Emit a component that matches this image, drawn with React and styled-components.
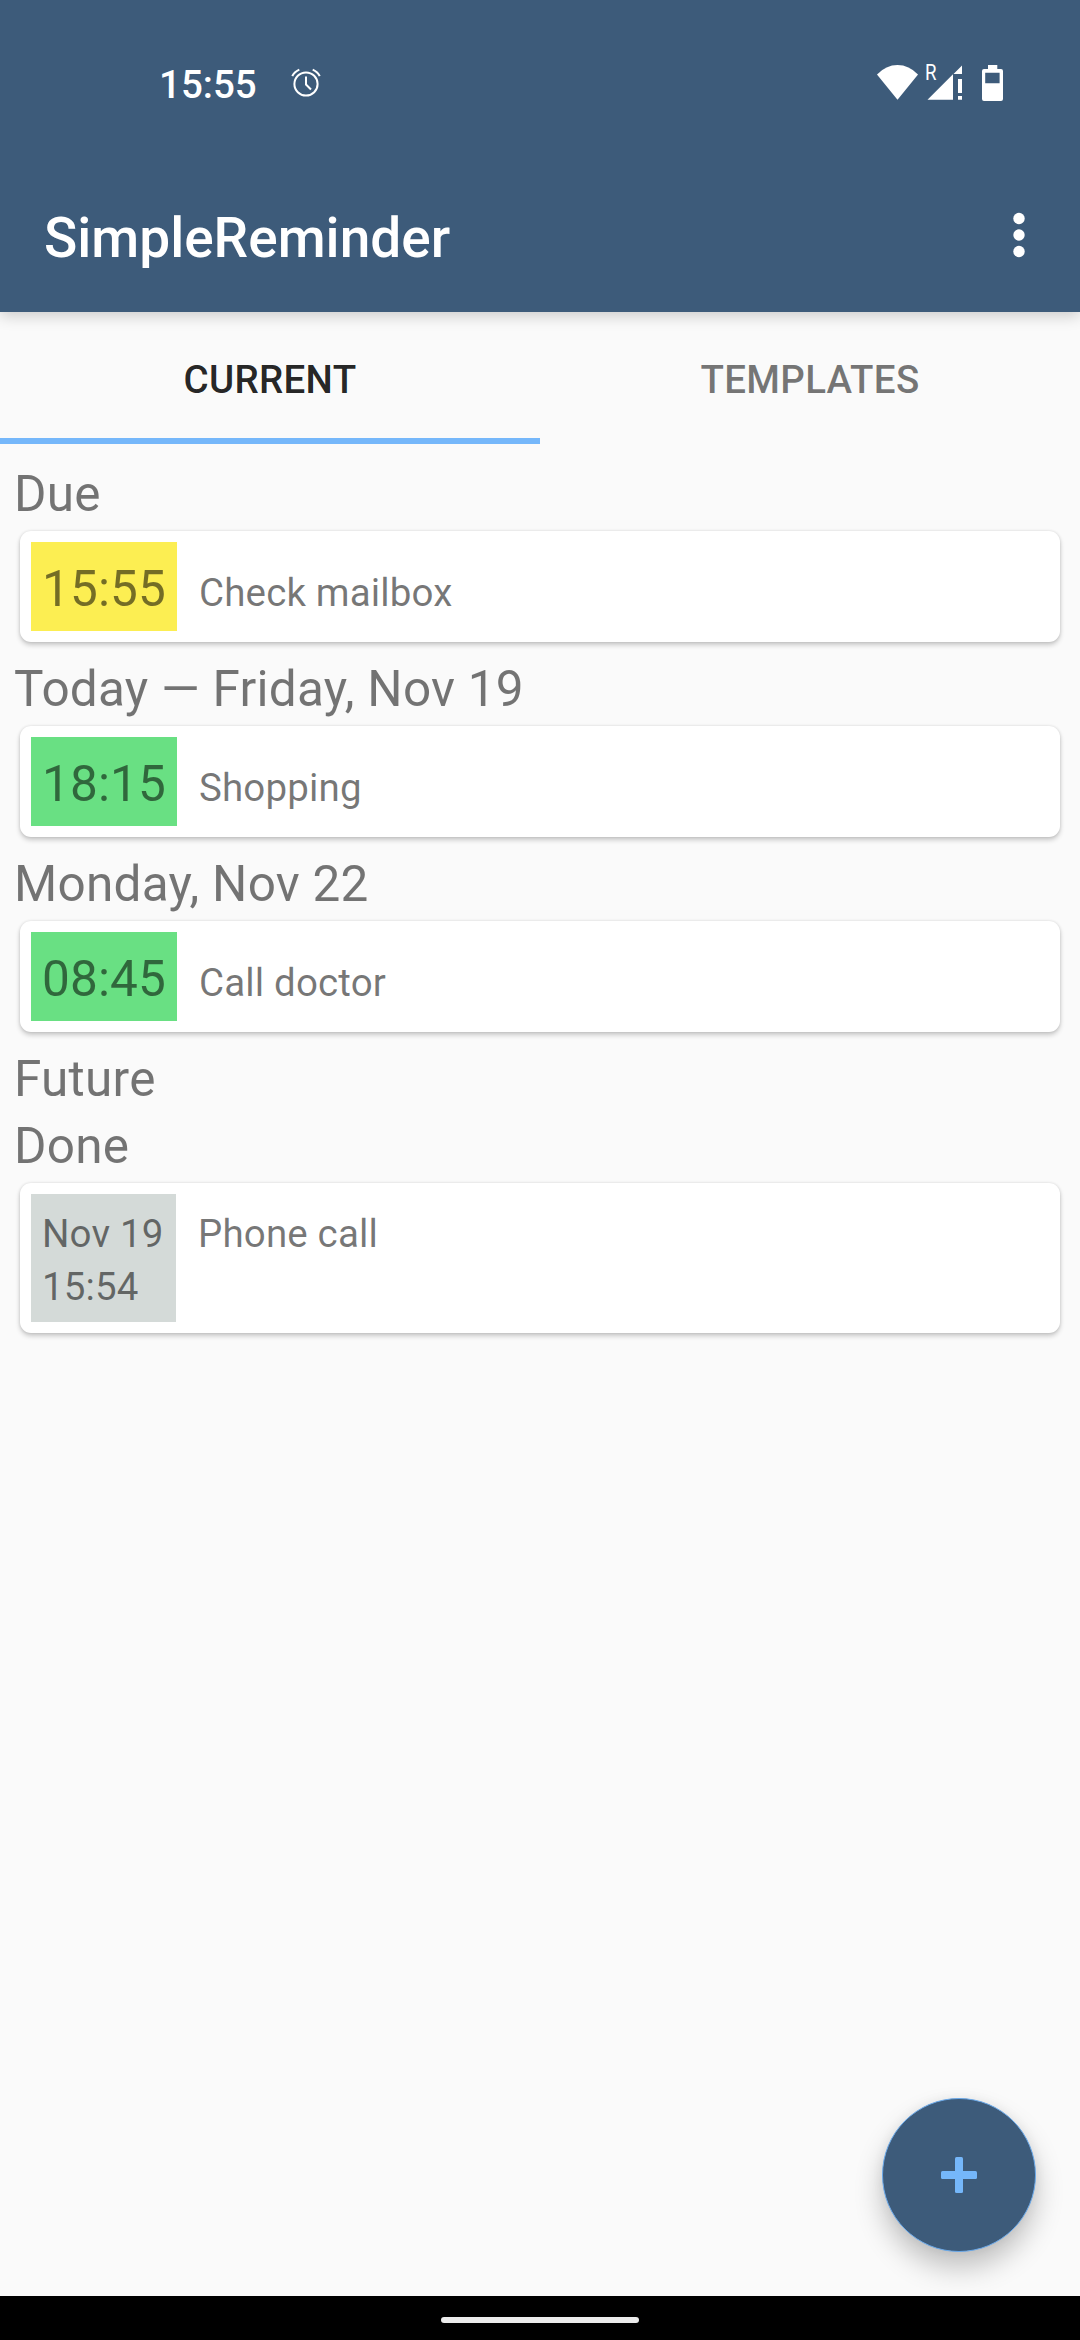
import React from "react";
import styled, { createGlobalStyle } from "styled-components";

const GlobalStyle = createGlobalStyle`
  *, *::before, *::after { box-sizing: border-box; }
  body { margin: 0; background: #fafafa; }
`;

const Screen = styled.div`
  position: relative;
  display: flex;
  flex-direction: column;
  width: 1080px;
  height: 2340px;
  overflow: hidden;
  background: #fafafa;
  color: rgba(0, 0, 0, 0.54);
  font-family: Roboto, "Noto Sans", sans-serif;
  font-size: 38.5px;
`;

const Header = styled.header`
  flex: none;
  height: 312px;
  background: #3d5b7a;
  color: #fff;
  box-shadow: 0 4px 14px rgba(0, 0, 0, 0.19);
`;

const StatusBar = styled.div`
  display: flex;
  align-items: flex-start;
  height: 158px;
  padding: 61px 76px 0 159px;
`;

const Clock = styled.span`
  font-weight: 500;
  line-height: 48px;
`;

const AlarmIcon = styled.svg`
  margin: 6px 0 0 33px;
`;

const StatusIcons = styled.div`
  display: flex;
  margin: -7px 0 0 auto;
`;

const Toolbar = styled.div`
  display: flex;
  align-items: center;
  justify-content: space-between;
  height: 154px;
  padding: 0 44px;
`;

const Title = styled.h1`
  margin: 6px 0 0;
  font-size: 55px;
  font-weight: 500;
  line-height: 66px;
`;

const MenuButton = styled.button`
  display: flex;
  justify-content: center;
  width: 34px;
  padding: 0;
  border: 0;
  background: none;
`;

const Tabs = styled.nav`
  display: flex;
  flex: none;
  height: 132px;
`;

const Tab = styled.button`
  flex: 1;
  padding: 9px 0 0;
  border: 0;
  border-bottom: 6px solid ${({ $active }) => ($active ? "#75b7fa" : "transparent")};
  background: none;
  color: ${({ $active }) => ($active ? "rgba(0, 0, 0, 0.87)" : "inherit")};
  font: inherit;
  font-weight: 500;
  letter-spacing: 0.3px;
  text-transform: uppercase;
`;

const List = styled.main`
  flex: 1;
  padding-top: 17px;
`;

const Heading = styled.h2`
  margin: 0;
  padding-left: 14px;
  font-size: 49.5px;
  font-weight: 400;
  letter-spacing: 0.25px;
  line-height: 67px;
`;

const Card = styled.article`
  display: flex;
  align-items: baseline;
  margin: 3px 20px 14px;
  padding: 11px;
  border-radius: 11px;
  background: #fff;
  box-shadow: 0 3px 5px rgba(0, 0, 0, 0.2), 0 0 3px rgba(0, 0, 0, 0.12);
`;

const tagColors = { due: "#fcee52", upcoming: "#69e083", done: "#d4dad8" };

const TimeTag = styled.time`
  flex: none;
  width: ${({ $status }) => ($status === "done" ? 145 : 146)}px;
  height: ${({ $status }) => ($status === "done" ? 128 : 89)}px;
  padding: ${({ $status }) => ($status === "done" ? 13 : 14)}px 0 0 11px;
  background: ${({ $status }) => tagColors[$status]};
  font-size: ${({ $status }) => ($status === "done" ? 38.5 : 49.5)}px;
  letter-spacing: 0.15px;
  line-height: ${({ $status }) => ($status === "done" ? 53 : 67)}px;
  white-space: pre-line;
`;

const Label = styled.span`
  padding-left: 22px;
  letter-spacing: 0.15px;
`;

const AddButton = styled.button`
  position: absolute;
  right: 44px;
  bottom: 88px;
  display: flex;
  align-items: center;
  justify-content: center;
  width: 154px;
  height: 154px;
  padding: 0;
  border: 1px solid #6aa9ea;
  border-radius: 50%;
  background: #3d5b7a;
  box-shadow: 0 16px 28px rgba(0, 0, 0, 0.23), 0 0 12px rgba(0, 0, 0, 0.06);
`;

const NavigationBar = styled.footer`
  position: relative;
  display: flex;
  flex: none;
  justify-content: center;
  height: 44px;
  padding-top: 21px;
  background: #000;
`;

const HomeHandle = styled.div`
  width: 198px;
  height: 6px;
  border-radius: 3px;
  background: #ebebeb;
`;

const sections = [
  { title: "Due", items: [{ status: "due", time: "15:55", label: "Check mailbox" }] },
  { title: "Today — Friday, Nov 19", items: [{ status: "upcoming", time: "18:15", label: "Shopping" }] },
  { title: "Monday, Nov 22", items: [{ status: "upcoming", time: "08:45", label: "Call doctor" }] },
  { title: "Future", items: [] },
  { title: "Done", items: [{ status: "done", time: "Nov 19\n15:54", label: "Phone call" }] },
];

export default function App() {
  return (
    <Screen>
      <GlobalStyle />
      <Header>
        <StatusBar>
          <Clock>15:55</Clock>
          <AlarmIcon width="32" height="32" viewBox="0 0 32 32" fill="none" stroke="#fff" strokeWidth="2">
            <circle cx="16" cy="17" r="11.6" />
            <path d="M16 9.5V17.5L21 22.5" />
            <path d="M2.3 9.2Q4 5 9.3 2.6M29.7 9.2Q28 5 22.7 2.6" />
          </AlarmIcon>
          <StatusIcons>
            <svg width="128" height="48" viewBox="876 54 128 48" fill="#fff">
              <path d="M877 74.5Q886 65 897.5 65T918 74.5L897.5 99.7Z" />
              <text x="925" y="80" fontSize="21.5" textLength="11.5" lengthAdjust="spacingAndGlyphs">R</text>
              <path d="M927.5 99.7L953 74.2V99.7ZM953.5 74L962 65.5V74ZM958 79h4v14h-4ZM958 96h4v3.7h-4Z" />
              <path fillRule="evenodd" d="M988 65h9.3v4h3.7a2 2 0 0 1 2 2v28a2 2 0 0 1-2 2h-17a2 2 0 0 1-2-2v-28a2 2 0 0 1 2-2h4ZM985.2 72.7v10.6h14.4v-10.6Z" />
            </svg>
          </StatusIcons>
        </StatusBar>
        <Toolbar>
          <Title>SimpleReminder</Title>
          <MenuButton aria-label="More options">
            <svg width="12" height="46" viewBox="0 0 12 46" fill="#fff">
              <circle cx="6" cy="6.5" r="5.7" />
              <circle cx="6" cy="23" r="5.7" />
              <circle cx="6" cy="39.5" r="5.7" />
            </svg>
          </MenuButton>
        </Toolbar>
      </Header>
      <Tabs>
        <Tab $active>Current</Tab>
        <Tab>Templates</Tab>
      </Tabs>
      <List>
        {sections.map(({ title, items }) => (
          <section key={title}>
            <Heading>{title}</Heading>
            {items.map(({ status, time, label }) => (
              <Card key={label}>
                <TimeTag $status={status}>{time}</TimeTag>
                <Label>{label}</Label>
              </Card>
            ))}
          </section>
        ))}
      </List>
      <NavigationBar>
        <HomeHandle />
      </NavigationBar>
      <AddButton aria-label="Add reminder">
        <svg width="36" height="36" viewBox="0 0 36 36" fill="#75b7fa">
          <rect x="14" width="8" height="36" rx="1.5" />
          <rect y="14" width="36" height="8" rx="1.5" />
        </svg>
      </AddButton>
    </Screen>
  );
}
